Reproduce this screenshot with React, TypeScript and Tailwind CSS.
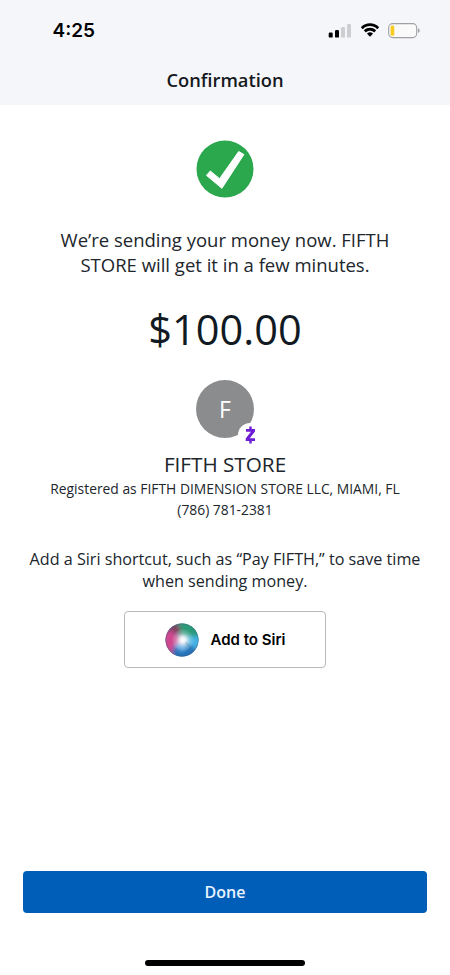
const OPEN_SANS = "font-['Open_Sans','Noto_Sans',sans-serif]";
const INTER = "font-['Inter','Liberation_Sans',sans-serif]";

const RECIPIENT = {
  initial: "F",
  name: "FIFTH STORE",
  registered: "Registered as FIFTH DIMENSION STORE LLC, MIAMI, FL",
  phone: "(786) 781-2381",
};

function SignalIcon() {
  return (
    <svg width="24" height="16" viewBox="0 0 24 16" className="block">
      <rect x="0.7" y="9.6" width="4" height="5" rx="1.2" fill="#000" />
      <rect x="7" y="7" width="4" height="7.6" rx="1.2" fill="#000" />
      <rect x="13" y="4" width="4" height="10.6" rx="1.2" fill="#cdced0" />
      <rect x="19" y="1" width="4" height="13.6" rx="1.2" fill="#cdced0" />
    </svg>
  );
}

function WifiIcon() {
  return (
    <svg width="20" height="15" viewBox="0 0 20 15" className="block">
      <path d="M10 3.1c2.7 0 5.1 1 6.9 2.8.2.2.4.2.6 0l1.4-1.4c.2-.2.2-.4 0-.6C16.5 1.6 13.4.3 10 .3S3.5 1.6 1.1 3.9c-.2.2-.2.4 0 .6l1.4 1.4c.2.2.4.2.6 0C4.9 4.1 7.3 3.1 10 3.1z" />
      <path d="M10 7.7c1.5 0 2.8.5 3.8 1.5.2.2.4.2.6 0l1.4-1.4c.2-.2.2-.5 0-.7C14.2 5.6 12.2 4.8 10 4.8s-4.2.8-5.8 2.3c-.2.2-.2.5 0 .7l1.4 1.4c.2.2.4.2.6 0 1-1 2.3-1.5 3.8-1.5z" />
      <path d="M12.7 10.9c.2-.2.2-.5 0-.6a4.2 4.2 0 0 0-5.4 0c-.2.1-.2.4 0 .6l2.4 2.5c.2.2.4.2.6 0z" />
    </svg>
  );
}

function BatteryIcon() {
  return (
    <svg width="33" height="16" viewBox="0 0 33 16" className="block">
      <rect x="0.7" y="0.6" width="28" height="14" rx="4" fill="#fafafa" stroke="#a0a1a3" strokeWidth="1.1" />
      <rect x="2.6" y="2.5" width="3.7" height="10.2" rx="1.5" fill="#f8cb22" />
      <path d="M30 5.2c1.1.4 1.7 1.3 1.7 2.4s-.6 2-1.7 2.4z" fill="#a0a1a3" />
    </svg>
  );
}

function SuccessIcon() {
  return (
    <svg width="58" height="58" viewBox="0 0 58 58" className="block">
      <circle cx="29" cy="29" r="28.5" fill="#2ba84d" />
      <path d="M10.5 35.4 14.3 31 23.6 38.7 42.7 11.5 47.9 14.5 25.9 48.3z" fill="#fff" stroke="#fff" strokeWidth="1" strokeLinejoin="round" />
    </svg>
  );
}

function ZelleIcon() {
  return (
    <svg width="12" height="18" viewBox="0 0 12 18" className="block">
      <path d="M6.5.4v3.2M6.5 14v3.5" stroke="#6d1ed4" strokeWidth="2.4" />
      <path d="M2 3h9v2.6L5.8 12.2H11V15H1.7v-2.6L6.9 5.8H2z" fill="#6d1ed4" />
    </svg>
  );
}

function SiriOrb() {
  return (
    <svg width="34" height="34" viewBox="0 0 34 34" className="block">
      <defs>
        <clipPath id="orb"><circle cx="17" cy="17" r="16.5" /></clipPath>
        <filter id="soft" x="-50%" y="-50%" width="200%" height="200%"><feGaussianBlur stdDeviation="2" /></filter>
        <radialGradient id="core">
          <stop offset="0" stopColor="#fff" />
          <stop offset="0.25" stopColor="#fff" stopOpacity="0.85" />
          <stop offset="0.6" stopColor="#fff" stopOpacity="0.3" />
          <stop offset="1" stopColor="#fff" stopOpacity="0" />
        </radialGradient>
      </defs>
      <g clipPath="url(#orb)">
        <rect width="34" height="34" fill="#4d6a98" />
        <g filter="url(#soft)">
          <path d="M-3 8 6 7l11 10-8 10-4 10-8-2z" fill="#d0468f" />
          <path d="M12-3h18l8 16-20 4-5-8z" fill="#2b9a78" />
          <path d="M17 15 38 12v12l-8 4z" fill="#45b4e4" />
          <path d="M15 19 31 25 24 38H9L7 27z" fill="#2270b8" />
          <path d="M2 6 12-1l4 10-4 2z" fill="#84405f" />
          <path d="M9 22 18 18l5 7-7 4z" fill="#5aa9e2" />
        </g>
        <circle cx="18" cy="17" r="11.5" fill="url(#core)" />
        <path d="m20 19 7 6" stroke="#31547e" strokeWidth="0.8" opacity="0.35" />
      </g>
      <circle cx="17" cy="17" r="16" fill="none" stroke="#40637d" strokeOpacity="0.35" />
    </svg>
  );
}

export default function App() {
  return (
    <div className={`flex h-[975px] w-[450px] flex-col overflow-hidden bg-white text-[#20262c] ${OPEN_SANS}`}>
      <header className="h-[105px] shrink-0 bg-[#f5f6f9]">
        <div className="flex h-[61px] items-center justify-between pr-[29px] pl-[52.5px]">
          <span className={`pt-px text-[19px] font-semibold text-black ${INTER}`}>4:25</span>
          <div className="flex items-center gap-2">
            <SignalIcon />
            <WifiIcon />
            <BatteryIcon />
          </div>
        </div>
        <h1 className="text-center text-[18.3px] leading-[38px] font-semibold text-[#16191d]">Confirmation</h1>
      </header>

      <main className="flex flex-1 flex-col items-center pt-[35px] text-center whitespace-nowrap">
        <SuccessIcon />
        <p className="mt-[29px] text-[18.5px] leading-[25px]">
          We’re sending your money now. FIFTH
          <br />
          STORE will get it in a few minutes.
        </p>
        <p className="mt-[26px] text-[41.5px] leading-[52px] text-[#111a22]">$100.00</p>

        <div className="relative mt-[25px] flex size-[58px] items-center justify-center rounded-full bg-[#8b8c8e] text-[23px] text-white">
          {RECIPIENT.initial}
          <span className="absolute top-[43px] left-[42px] flex size-[24px] items-center justify-center rounded-full bg-white">
            <ZelleIcon />
          </span>
        </div>
        <h2 className="mt-[12px] text-[20.7px] leading-[28px]">{RECIPIENT.name}</h2>
        <p className="mt-px text-[13.85px] leading-[20px]">{RECIPIENT.registered}</p>
        <p className="mt-px text-[13.85px] leading-[20px]">{RECIPIENT.phone}</p>

        <p className="mt-[28px] text-[16.15px] leading-[22px]">
          Add a Siri shortcut, such as “Pay FIFTH,” to save time
          <br />
          when sending money.
        </p>
        <button className={`mt-[19px] flex h-[57px] w-[202px] items-center justify-center gap-3 rounded-[4px] border border-[#b9babc] text-[15px] font-semibold text-black ${INTER}`}>
          <SiriOrb />
          <span className="pt-px">Add to Siri</span>
        </button>
      </main>

      <footer className="flex shrink-0 flex-col items-center px-[23px] pb-[9px]">
        <button className="h-[42px] w-full rounded-[4px] bg-[#005eb8] text-[16px] font-semibold text-[#e9f4ff]">Done</button>
        <div className="mt-[47px] h-[6px] w-[160px] rounded-full bg-black" />
      </footer>
    </div>
  );
}
